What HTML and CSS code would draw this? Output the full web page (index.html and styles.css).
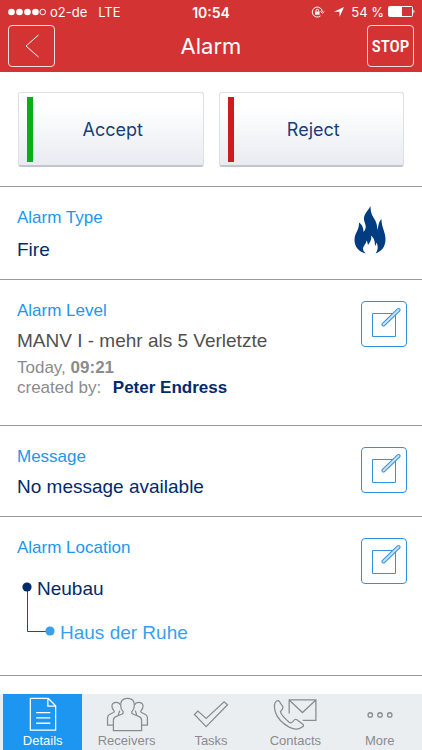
FILE: index.html
```html
<!DOCTYPE html>
<html lang="en">
<head>
    <meta charset="UTF-8">
    <meta name="viewport" content="width=device-width, initial-scale=1.0">
    <title>Alarm</title>
    <link rel="stylesheet" href="styles.css">
</head>
<body>
    <svg class="sprite" aria-hidden="true">
        <symbol id="icon-edit" viewBox="0 0 34 34">
            <path d="M5.500 6.500H28.500V29.500H5.500Z"/>
            <path class="pen" d="M16.500 17.500L31.500 3"/>
            <path class="pen-core" d="M16.500 17.500L31.500 3"/>
        </symbol>
    </svg>

    <header class="header">
        <div class="status">
            <div class="carrier">
                <svg class="signal" viewBox="0 0 38 8">
                    <circle cx="3.500" cy="4" r="3.300"/>
                    <circle cx="11.500" cy="4" r="3.300"/>
                    <circle cx="19.500" cy="4" r="3.300"/>
                    <circle cx="27.500" cy="4" r="3.300"/>
                    <circle class="empty" cx="34.700" cy="4" r="2.800"/>
                </svg>
                <span>o2-de</span>
                <span class="network">LTE</span>
            </div>
            <span class="clock">10:54</span>
            <div class="power">
                <svg class="lock" viewBox="0 0 14 12">
                    <path class="ring" d="M11.300 6A5 5 0 1 0 9.500 9.900M9.500 5.500L11.300 7.300L13.300 5.500"/>
                    <path d="M4 5.500H8.600V8.700H4Z"/>
                    <path class="ring" d="M5 5.500V4.500Q5 3.200 6.300 3.200Q7.600 3.200 7.600 4.500V5.500"/>
                </svg>
                <svg class="arrow" viewBox="0 0 12 12"><path d="M11 1L6.500 11V5.800H1Z"/></svg>
                <span>54 %</span>
                <svg class="battery" viewBox="0 0 28 12">
                    <rect class="ring" x="0.500" y="0.500" width="24" height="10" rx="1"/>
                    <rect x="1" y="1" width="13" height="9"/>
                    <path d="M25.500 3.500Q27.500 5.500 25.500 7.500Z"/>
                </svg>
            </div>
        </div>
        <div class="title-bar">
            <button class="header-button" type="button" aria-label="Back">
                <svg class="back" viewBox="0 0 14 24"><path d="M13.500 1L1 12L13.500 23"/></svg>
            </button>
            <h1>Alarm</h1>
            <button class="header-button stop" type="button">STOP</button>
        </div>
    </header>

    <main>
        <div class="actions">
            <button class="action accept" type="button">Accept</button>
            <button class="action reject" type="button">Reject</button>
        </div>

        <section class="row">
            <div class="row-text type">
                <h2>Alarm Type</h2>
                <p class="value">Fire</p>
            </div>
            <svg class="fire" viewBox="0 0 32 48">
                <path d="M16.500 0C16.500 7 18.500 10 21 14C23 18 23.500 21 23 24C25 21 23.500 17 27.500 13C27 20 32 27 31.500 34C31 41 28 45 21.500 47.500C24 44 24.500 41 22.500 36.500C22 38 22 39 21 40C21 35 20 32 17 29.500C18 34 16 36 14 39C13.500 37 13.500 36 12.500 34.500C12 38 9 40 9 43C9 45 10.500 46 12 47.500C5 46 0.500 41 0.500 34C0.500 27 5.500 24 5 16.500C8.500 19 9.500 22 9.500 26C14 21 10.500 18 10 13.500C9.500 8 14 5 16.500 0Z"/>
            </svg>
        </section>

        <section class="row">
            <div class="row-text">
                <h2>Alarm Level</h2>
                <p class="value level">MANV I - mehr als 5 Verletzte</p>
                <div class="meta">
                    <p>Today, <b>09:21</b></p>
                    <p>created by: <b class="author">Peter Endress</b></p>
                </div>
            </div>
            <button class="edit" type="button" aria-label="Edit alarm level"><svg><use href="#icon-edit"/></svg></button>
        </section>

        <section class="row">
            <div class="row-text">
                <h2>Message</h2>
                <p class="value">No message available</p>
            </div>
            <button class="edit" type="button" aria-label="Edit message"><svg><use href="#icon-edit"/></svg></button>
        </section>

        <section class="row location">
            <div class="row-text">
                <h2>Alarm Location</h2>
                <div class="places">
                    <svg class="tree" viewBox="0 0 34 56">
                        <path d="M5.500 5V49.500H28"/>
                        <circle cx="5" cy="5" r="4.600"/>
                        <circle class="child" cx="28" cy="49" r="4.600"/>
                    </svg>
                    <div class="names">
                        <p class="value">Neubau</p>
                        <p class="value child-name">Haus der Ruhe</p>
                    </div>
                </div>
            </div>
            <button class="edit" type="button" aria-label="Edit alarm location"><svg><use href="#icon-edit"/></svg></button>
        </section>
    </main>

    <nav class="tabs">
        <a class="tab active" href="#details">
            <svg viewBox="0 0 46 36">
                <path d="M10 1.500H28.500L36 9V34H10ZM28 1.500V9.500H36"/>
                <path d="M16 16H30.500M16 21.500H30.500M16 27H30.500"/>
            </svg>
            Details
        </a>
        <a class="tab" href="#receivers">
            <svg viewBox="0 0 46 36">
                <path d="M9 34.500V24Q9 21 12 20L18 17.500Q19.500 17 19 15Q16.500 13 16.500 9Q16 1.500 23.500 1.500Q31 1.500 30.500 9Q30.500 13 28 15Q27.500 17 29 17.500L35 20Q38 21 38 24V34.500Z"/>
                <path d="M9 29H3V21Q3 19 5 18L9 16Q10.500 15 9.500 14Q7.500 12 7.500 9Q8 5.500 12 5.500Q15 5.500 16 8M14 18.500L15.500 14M38 29H44V21Q44 19 42 18L38 16Q36.500 15 37.500 14Q39.500 12 39.500 9Q39 5.500 35 5.500Q32 5.500 31 8M33 18.500L31.500 14"/>
            </svg>
            Receivers
        </a>
        <a class="tab" href="#tasks">
            <svg viewBox="0 0 46 36"><path d="M6 18L9.500 14.500L18 22L36.500 5L40 8L18 30.500Z"/></svg>
            Tasks
        </a>
        <a class="tab" href="#contacts">
            <svg viewBox="0 0 46 36">
                <path d="M17 17V3H44.500V24H31M17 3L30.700 16L44.500 3"/>
                <path d="M2.500 6Q4 3 6.500 4L10.500 10Q11 12 8 15Q9 19 17 26Q19 27.500 21 25Q23 22 25 23.500L31 28Q33 29.500 30 31Q25 35 17 31Q6 25 3 16Q1 10 2.500 6Z"/>
            </svg>
            Contacts
        </a>
        <a class="tab" href="#more">
            <svg viewBox="0 0 46 36">
                <circle cx="13" cy="18.500" r="2.300"/>
                <circle cx="23" cy="18.500" r="2.300"/>
                <circle cx="33" cy="18.500" r="2.300"/>
            </svg>
            More
        </a>
    </nav>
</body>
</html>
```
FILE: styles.css
```css
* {
    box-sizing: border-box;
}

body {
    display: flex;
    flex-direction: column;
    min-height: 100vh;
    margin: 0;
    background: #fff;
    color: #002b6b;
    font-family: "Liberation Sans", Arial, sans-serif;
}

h1, h2, p {
    margin: 0;
    font-weight: normal;
}

button {
    margin: 0;
    padding: 0;
    cursor: pointer;
}

svg {
    display: block;
    fill: none;
    stroke-width: 1;
}

.sprite {
    position: absolute;
    width: 0;
    height: 0;
}

/* Header */
.header {
    height: 72px;
    padding: 0 8px;
    background: #d43333;
    color: #fff;
    font-family: Inter, sans-serif;
}

.status {
    display: grid;
    grid-template-columns: 1fr auto 1fr;
    align-items: center;
    height: 24px;
    font-size: 13px;
}

.status svg {
    fill: #fff;
}

.status .ring,
.status .empty {
    fill: none;
    stroke: #fff;
}

.carrier,
.power {
    display: flex;
    align-items: center;
    gap: 4px;
    white-space: nowrap;
}

.power {
    justify-content: flex-end;
    margin-right: -2px;
}

.network {
    margin-left: 7px;
}

.clock {
    font-size: 14px;
    font-weight: 600;
}

.signal {
    width: 38px;
    height: 8px;
}

.lock {
    width: 14px;
    height: 12px;
    margin-right: 4px;
}

.arrow {
    width: 12px;
    height: 12px;
    margin-right: 2px;
}

.battery {
    width: 28px;
    height: 12px;
}

.title-bar {
    display: flex;
    align-items: center;
    justify-content: space-between;
}

h1 {
    font-size: 22px;
    line-height: 44px;
}

.header-button {
    display: flex;
    align-items: center;
    justify-content: center;
    width: 47px;
    height: 42px;
    border: 1px solid #fbdcdc;
    border-radius: 4px;
    background: none;
    color: #fff;
}

.back {
    width: 14px;
    height: 24px;
    stroke: #fff;
}

.stop {
    font-family: "Roboto Condensed", "Liberation Sans Narrow", "Liberation Sans", sans-serif;
    font-size: 17px;
    font-weight: 500;
}

/* Accept / reject */
.actions {
    display: grid;
    grid-template-columns: 1fr 1fr;
    gap: 15px;
    padding: 20px 18px 19px;
    border-bottom: 1px solid #999;
}

.action {
    display: grid;
    grid-template-columns: 6px 1fr 2px;
    align-items: center;
    height: 75px;
    padding: 4px 8px;
    border: 1px solid #dfe0e2;
    border-bottom: 2px solid #c4c6ca;
    border-radius: 3px;
    background: linear-gradient(#fff 20%, #e8ebf1);
    color: #173f7a;
    font-family: Inter, sans-serif;
    font-size: 18px;
}

.action::before {
    content: "";
    height: 65px;
    background: #0cae18;
}

.reject::before {
    background: #cc1c20;
}

/* Detail rows */
.row {
    display: flex;
    align-items: flex-start;
    justify-content: space-between;
    padding: 21px 15px 17px 17px;
    border-bottom: 1px solid #999;
}

h2 {
    margin-bottom: 8px;
    color: #2196ec;
    font-size: 17px;
    line-height: 20px;
}

.type h2 {
    margin-bottom: 10px;
}

.value {
    font-size: 19px;
    line-height: 24px;
}

.level {
    color: #505050;
}

.meta {
    margin: 5px 0 10px;
    color: #8b8b8d;
    font-size: 17px;
    line-height: 20px;
}

.author {
    margin-left: 7px;
    color: #002b6b;
}

.fire {
    width: 32px;
    height: 48px;
    margin: -2px 21px 0 0;
    fill: #003c82;
}

.edit {
    display: flex;
    align-items: center;
    justify-content: center;
    width: 46px;
    height: 46px;
    border: 1px solid #2f92e0;
    border-radius: 4px;
    background: #fff;
}

.edit svg {
    width: 34px;
    height: 34px;
    stroke: #3592dc;
}

.pen {
    stroke-width: 4;
    stroke-linecap: round;
}

.pen-core {
    stroke: #c5e2f8;
    stroke-width: 2;
    stroke-linecap: round;
}

.location {
    padding-bottom: 30px;
}

.places {
    display: flex;
    padding: 11px 0 0 5px;
}

.tree {
    width: 34px;
    height: 56px;
    margin-top: 5px;
    stroke: #33417c;
}

.tree circle {
    fill: #002b6b;
    stroke: none;
}

.tree .child {
    fill: #389fee;
}

.names {
    display: flex;
    flex-direction: column;
    gap: 20px;
    margin-left: -19px;
}

.child-name {
    padding-left: 23px;
    color: #389fee;
}

/* Tab bar */
.tabs {
    display: grid;
    grid-template-columns: repeat(5, 1fr);
    margin-top: auto;
    background: #ebeef1;
}

.tab {
    display: flex;
    flex-direction: column;
    align-items: center;
    height: 56px;
    padding-top: 3px;
    color: #8a8b8d;
    font-size: 13px;
    line-height: 18px;
    text-decoration: none;
}

.tab svg {
    width: 46px;
    height: 36px;
    stroke: #8a8b8d;
    stroke-width: 1.3;
}

.tab.active {
    margin: 0 2px 0 3px;
    background: #1c96f0;
    color: #fff;
}

.tab.active svg {
    stroke: #fff;
}
```
